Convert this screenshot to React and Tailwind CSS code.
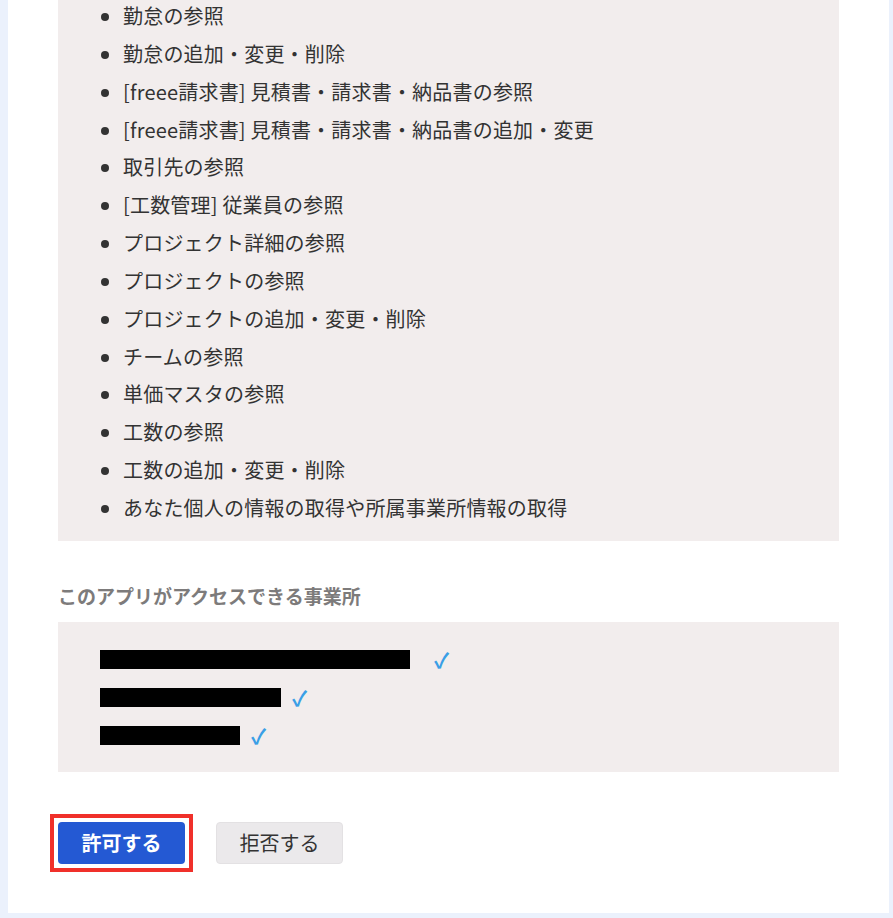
import React from 'react';

const scopes = [
  '勤怠の参照',
  '勤怠の追加・変更・削除',
  '[freee請求書] 見積書・請求書・納品書の参照',
  '[freee請求書] 見積書・請求書・納品書の追加・変更',
  '取引先の参照',
  '[工数管理] 従業員の参照',
  'プロジェクト詳細の参照',
  'プロジェクトの参照',
  'プロジェクトの追加・変更・削除',
  'チームの参照',
  '単価マスタの参照',
  '工数の参照',
  '工数の追加・変更・削除',
  'あなた個人の情報の取得や所属事業所情報の取得',
];

// redacted company names
const companies = [
  { width: 310, gap: 24 },
  { width: 181, gap: 11 },
  { width: 140, gap: 11 },
];

const App = () => {
  return (
    <div
      className="min-h-[918px] bg-[#ebf1fc] pl-[8px] pr-[4px] pb-[5px]"
      style={{ fontFamily: '"Noto Sans CJK JP", "Noto Sans", sans-serif' }}
    >
      <div className="bg-white px-[50px] pb-[41px]">
        {/* Scopes */}
        <div className="bg-[#f2eded] pb-[14px]">
          <ul className="-mt-[3px] list-disc pl-[65px] text-[20px] leading-[37.85px] tracking-[0.2px] text-[#333]">
            {scopes.map(scope => (
              <li key={scope}>{scope}</li>
            ))}
          </ul>
        </div>

        <h2 className="mt-[40px] text-[19px] font-bold leading-[30px] text-[#7d7b7b]">
          このアプリがアクセスできる事業所
        </h2>

        <div className="mt-[11px] bg-[#f2eded] pl-[42px] pt-[19px] pb-[17px]">
          {companies.map((c, i) => (
            <div key={i} className="flex h-[38px] items-center">
              <div className="h-[19px] bg-black" style={{ width: c.width }}></div>
              <span
                className="text-[21px] font-bold leading-none text-[#3a9fe6]"
                style={{ marginLeft: c.gap }}
              >
                ✓
              </span>
            </div>
          ))}
        </div>

        {/* Actions */}
        <div className="mt-[42px] flex items-center">
          <div className="-ml-[8px] border-[4px] border-[#f0302a] p-[4px]">
            <button className="h-[42px] w-[127px] rounded-[4px] bg-[#2459d3] text-[20px] font-bold text-white">
              許可する
            </button>
          </div>
          <button className="ml-[23px] h-[42px] w-[127px] rounded-[4px] border border-[#e3e1e3] bg-[#ebe9eb] text-[20px] text-[#333]">
            拒否する
          </button>
        </div>
      </div>
    </div>
  );
};

export default App;
